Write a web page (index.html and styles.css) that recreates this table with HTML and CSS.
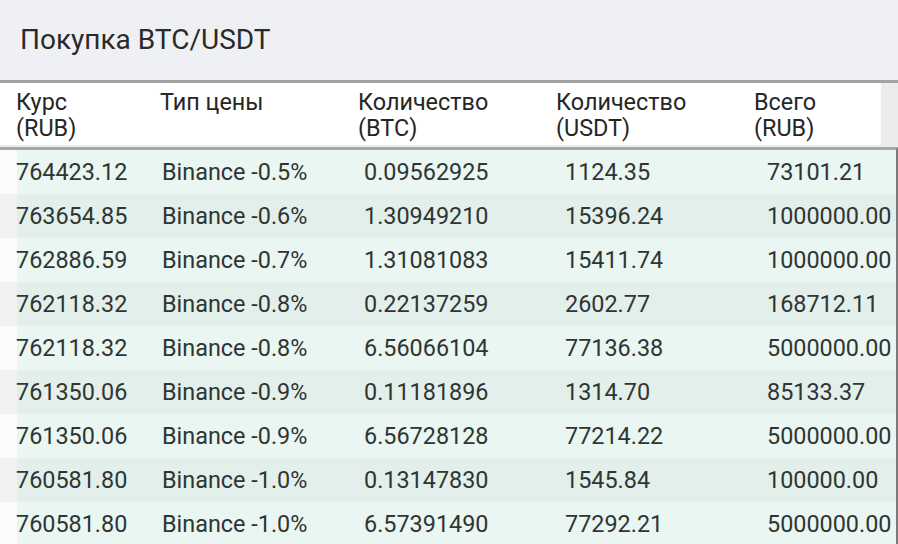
FILE: index.html
```html
<!DOCTYPE html>
<html lang="ru">
<head>
<meta charset="utf-8">
<link rel="stylesheet" href="styles.css">
</head>
<body>
<div class="title">Покупка BTC/USDT</div>
<div class="thead">
  <div class="th">Курс<br>(RUB)</div>
  <div class="th">Тип цены</div>
  <div class="th">Количество<br>(BTC)</div>
  <div class="th">Количество<br>(USDT)</div>
  <div class="th">Всего<br>(RUB)</div>
</div>
<div class="tbody">
  <div class="row"><div class="gut"></div><div>764423.12</div><div>Binance -0.5%</div><div>0.09562925</div><div>1124.35</div><div>73101.21</div></div>
  <div class="row"><div class="gut"></div><div>763654.85</div><div>Binance -0.6%</div><div>1.30949210</div><div>15396.24</div><div>1000000.00</div></div>
  <div class="row"><div class="gut"></div><div>762886.59</div><div>Binance -0.7%</div><div>1.31081083</div><div>15411.74</div><div>1000000.00</div></div>
  <div class="row"><div class="gut"></div><div>762118.32</div><div>Binance -0.8%</div><div>0.22137259</div><div>2602.77</div><div>168712.11</div></div>
  <div class="row"><div class="gut"></div><div>762118.32</div><div>Binance -0.8%</div><div>6.56066104</div><div>77136.38</div><div>5000000.00</div></div>
  <div class="row"><div class="gut"></div><div>761350.06</div><div>Binance -0.9%</div><div>0.11181896</div><div>1314.70</div><div>85133.37</div></div>
  <div class="row"><div class="gut"></div><div>761350.06</div><div>Binance -0.9%</div><div>6.56728128</div><div>77214.22</div><div>5000000.00</div></div>
  <div class="row"><div class="gut"></div><div>760581.80</div><div>Binance -1.0%</div><div>0.13147830</div><div>1545.84</div><div>100000.00</div></div>
  <div class="row"><div class="gut"></div><div>760581.80</div><div>Binance -1.0%</div><div>6.57391490</div><div>77292.21</div><div>5000000.00</div></div>
</div>
</body>
</html>
```
FILE: styles.css
```css
html, body {
  margin: 0;
  padding: 0;
}
body {
  width: 898px;
  height: 544px;
  overflow: hidden;
  background: #ececec;
  font-family: Roboto, "Noto Sans", sans-serif;
  color: #2f3533;
}
.title {
  height: 83px;
  box-sizing: border-box;
  background: #eff0f3;
  border-bottom: 3px solid #a3a3a3;
  padding-left: 20px;
  padding-bottom: 1px;
  display: flex;
  align-items: center;
  font-size: 28px;
  color: #2a2a2a;
}
.thead {
  width: 881px;
  height: 62px;
  background: #fff;
  display: grid;
  grid-template-columns: 144px 198px 198px 198px 1fr;
  padding-left: 16px;
  box-sizing: border-box;
  padding-top: 6px;
  font-size: 23.4px;
  line-height: 26px;
  color: #262626;
}
.tbody {
  border-top: 3px solid #a8a8a8;
  border-right: 2px solid #7a7a7a;
  margin-top: 2px;
}
.row {
  display: grid;
  grid-template-columns: 17px 145px 202px 201px 202px 1fr;
  height: 44px;
  align-items: center;
  background: #e9f6f1;
  font-size: 23.4px;
  white-space: nowrap;
}
.row:nth-child(even) {
  background: #e2efea;
}
.gut {
  align-self: stretch;
  background: #fbfbfb;
}
.row:nth-child(even) .gut {
  background: #f1f1f1;
}
.row > div:nth-child(2) {
  margin-left: -1px;
}
```
